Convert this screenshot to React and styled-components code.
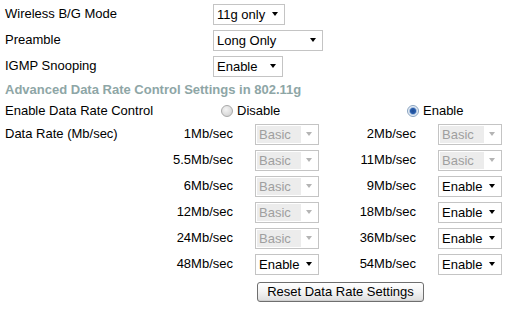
import React from "react";
import styled, { createGlobalStyle, css } from "styled-components";

const Global = createGlobalStyle`
  html, body { margin: 0; padding: 0; background: #fff; }
  body { font-family: "Liberation Sans", Arial, sans-serif; font-size: 13px; color: #000; }
`;

const Page = styled.div`
  width: 518px;
  height: 311px;
  padding: 1px 0 0 5px;
  box-sizing: border-box;
  overflow: hidden;
`;

const FormRow = styled.div`
  display: grid;
  grid-template-columns: 208px auto;
  align-items: center;
  height: 26px;
`;

const Label = styled.div`
  white-space: nowrap;
  line-height: 16px;
`;

const Heading = styled.div`
  height: 22px;
  line-height: 21px;
  font-weight: bold;
  color: #8ea6a6;
  white-space: nowrap;
`;

const RadioRow = styled.div`
  display: grid;
  grid-template-columns: 216px 186px auto;
  align-items: center;
  height: 20px;
`;

const RadioOption = styled.label`
  display: flex;
  align-items: center;
  gap: 4px;
  line-height: 16px;
`;

const RadioDot = styled.span`
  width: 12px;
  height: 12px;
  border-radius: 50%;
  box-sizing: border-box;
  border: 1px solid #a9a9a9;
  background: radial-gradient(circle at 40% 35%, #f4f4f4 0%, #dcdcdc 60%, #c8c8c8 100%);
  ${(p) =>
    p.$checked &&
    css`
      border-color: #8aa4c0;
      background: radial-gradient(circle at 50% 50%, #1d4a92 0%, #2a5fae 38%, #9db8da 48%, #e6edf6 62%, #f2f5f9 100%);
    `}
`;

const RateGrid = styled.div`
  display: grid;
  grid-template-columns: 118px 88px 64px 75px 64px;
  column-gap: 22px;
  grid-auto-rows: 26px;
  align-items: center;
`;

const RateLabel = styled.div`
  text-align: right;
  white-space: nowrap;
  line-height: 16px;
`;

const SelectBox = styled.div`
  box-sizing: border-box;
  width: ${(p) => p.$w}px;
  height: 21px;
  border: 1px solid #c4c4c4;
  background: #fff;
  display: flex;
  align-items: center;
  color: ${(p) => (p.$disabled ? "#9f9f9f" : "#000")};
`;

const SelectValue = styled.span`
  flex: 1;
  height: 100%;
  display: flex;
  align-items: center;
  padding-left: 3px;
  white-space: nowrap;
  ${(p) =>
    p.$disabled &&
    css`
      background: #ececec;
      margin: 1px 0 1px 1px;
      height: calc(100% - 2px);
      padding-left: 2px;
    `}
`;

const Arrow = styled.span`
  width: 17px;
  flex: none;
  display: flex;
  justify-content: center;
  align-items: center;
  &::after {
    content: "";
    border-left: 3.5px solid transparent;
    border-right: 3.5px solid transparent;
    border-top: 4px solid ${(p) => (p.$disabled ? "#b4b4b4" : "#000")};
    margin-right: 2px;
  }
`;

const Select = ({ value, w, disabled }) => (
  <SelectBox $w={w} $disabled={disabled} role="listbox" aria-disabled={disabled}>
    <SelectValue $disabled={disabled}>{value}</SelectValue>
    <Arrow $disabled={disabled} />
  </SelectBox>
);

const ButtonRow = styled.div`
  display: grid;
  grid-template-columns: 252px auto;
  margin-top: 5px;
`;

const Button = styled.button`
  grid-column: 2;
  justify-self: start;
  width: 167px;
  height: 20px;
  padding: 0;
  font-family: "Liberation Sans", Arial, sans-serif;
  font-size: 13px;
  color: #000;
  border: 1px solid #6f6f6f;
  border-radius: 3px;
  background: linear-gradient(#ffffff 0%, #f3f3f3 50%, #dedede 100%);
  box-shadow: inset 0 -1px 0 #d0d0d0;
  line-height: 18px;
`;

const rates = [
  ["1Mb/sec", "Basic", true, "2Mb/sec", "Basic", true],
  ["5.5Mb/sec", "Basic", true, "11Mb/sec", "Basic", true],
  ["6Mb/sec", "Basic", true, "9Mb/sec", "Enable", false],
  ["12Mb/sec", "Basic", true, "18Mb/sec", "Enable", false],
  ["24Mb/sec", "Basic", true, "36Mb/sec", "Enable", false],
  ["48Mb/sec", "Enable", false, "54Mb/sec", "Enable", false],
];

export default function App() {
  return (
    <>
      <Global />
      <Page>
        <FormRow>
          <Label>Wireless B/G Mode</Label>
          <Select value="11g only" w={72} />
        </FormRow>
        <FormRow>
          <Label>Preamble</Label>
          <Select value="Long Only" w={110} />
        </FormRow>
        <FormRow>
          <Label>IGMP Snooping</Label>
          <Select value="Enable" w={70} />
        </FormRow>
        <Heading>Advanced Data Rate Control Settings in 802.11g</Heading>
        <RadioRow>
          <Label>Enable Data Rate Control</Label>
          <RadioOption>
            <RadioDot />
            Disable
          </RadioOption>
          <RadioOption>
            <RadioDot $checked />
            Enable
          </RadioOption>
        </RadioRow>
        <RateGrid>
          {rates.map((r, i) => (
            <React.Fragment key={r[0]}>
              <Label>{i === 0 ? "Data Rate (Mb/sec)" : ""}</Label>
              <RateLabel>{r[0]}</RateLabel>
              <Select value={r[1]} w={64} disabled={r[2]} />
              <RateLabel>{r[3]}</RateLabel>
              <Select value={r[4]} w={64} disabled={r[5]} />
            </React.Fragment>
          ))}
        </RateGrid>
        <ButtonRow>
          <Button>Reset Data Rate Settings</Button>
        </ButtonRow>
      </Page>
    </>
  );
}
